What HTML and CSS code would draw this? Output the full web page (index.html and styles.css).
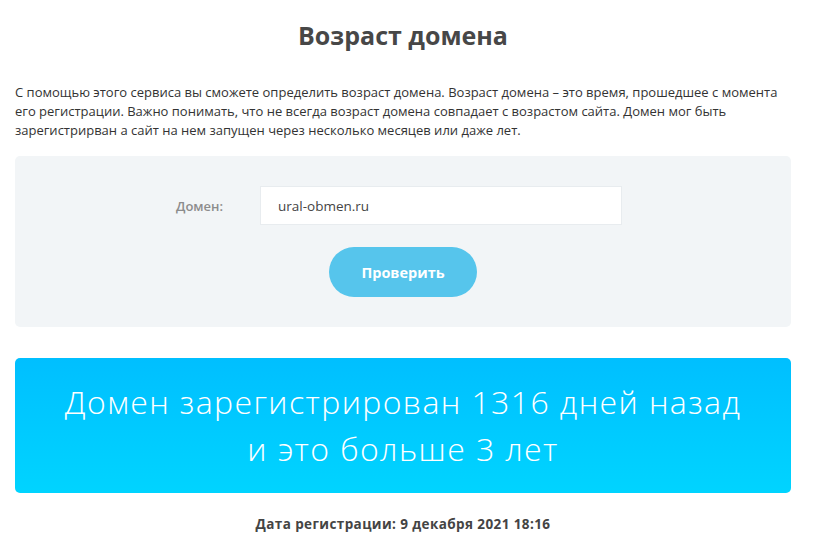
FILE: index.html
```html
<!DOCTYPE html>
<html lang="ru">
<head>
<meta charset="utf-8">
<title>Возраст домена</title>
<link rel="stylesheet" href="styles.css">
</head>
<body>
<div class="page">
  <h1 class="title">Возраст домена</h1>
  <p class="intro">С помощью этого сервиса вы сможете определить возраст домена. Возраст домена – это время, прошедшее с момента его регистрации. Важно понимать, что не всегда возраст домена совпадает с возрастом сайта. Домен мог быть зарегистрирван а сайт на нем запущен через несколько месяцев или даже лет.</p>
  <form class="check-box">
    <div class="field-row">
      <label class="field-label" for="domain">Домен:</label>
      <input class="field-input" id="domain" type="text" value="ural-obmen.ru">
    </div>
    <button class="check-btn" type="button">Проверить</button>
  </form>
  <div class="result">
    <div class="result-text">Домен зарегистрирован 1316 дней назад<br>и это больше 3 лет</div>
  </div>
  <div class="reg-date">Дата регистрации: 9 декабря 2021 18:16</div>
</div>
</body>
</html>
```

FILE: styles.css
```css
html, body {
  margin: 0;
  padding: 0;
  background: #ffffff;
}
body {
  font-family: "Open Sans", "Noto Sans", "DejaVu Sans", sans-serif;
  color: #333;
}
.page {
  width: 776px;
  margin-left: 15px;
  display: flex;
  flex-direction: column;
}
.title {
  margin: 19px 0 0;
  font-size: 25px;
  line-height: 32px;
  font-weight: 700;
  color: #474747;
  text-align: center;
}
.intro {
  margin: 32px 0 0;
  font-size: 13px;
  line-height: 19px;
  color: #333;
}
.check-box {
  margin: 16px 0 0;
  background: #f2f5f7;
  border-radius: 5px;
  height: 171px;
  box-sizing: border-box;
  padding-top: 30px;
  display: flex;
  flex-direction: column;
  align-items: center;
}
.field-row {
  align-self: stretch;
  display: flex;
  align-items: center;
  padding-left: 161px;
}
.field-label {
  width: 84px;
  font-size: 13px;
  font-weight: 600;
  color: #8c8c8c;
}
.field-input {
  width: 362px;
  height: 39px;
  box-sizing: border-box;
  border: 1px solid #e8ecef;
  background: #fff;
  padding: 0 17px;
  font-family: inherit;
  font-size: 13.5px;
  color: #444;
  outline: none;
}
.check-btn {
  margin-top: 22px;
  width: 148px;
  height: 50px;
  border: none;
  border-radius: 25px;
  background: #56c5ec;
  color: #fff;
  font-family: inherit;
  font-size: 14.5px;
  font-weight: 700;
  cursor: pointer;
}
.result {
  margin-top: 31px;
  height: 135px;
  border-radius: 5px;
  background: linear-gradient(180deg, #00bfff 0%, #00d4ff 100%);
  display: flex;
  align-items: center;
  justify-content: center;
}
.result-text {
  color: #fff;
  font-size: 32px;
  font-weight: 300;
  letter-spacing: 1.4px;
  line-height: 47px;
  text-align: center;
  padding-bottom: 2px;
}
.reg-date {
  margin-top: 22px;
  text-align: center;
  font-size: 13.5px;
  font-weight: 700;
  letter-spacing: 0.4px;
  color: #444;
}
```
